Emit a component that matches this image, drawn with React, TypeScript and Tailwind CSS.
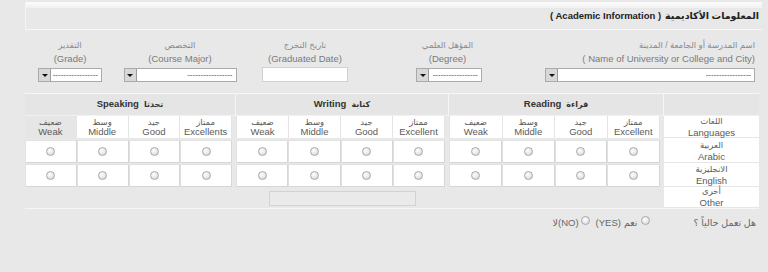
import React from "react";

function Radio() {
  return (
    <span className="inline-block w-[9px] h-[9px] rounded-full border border-[#a9a9a9] bg-[radial-gradient(circle_at_40%_35%,#ffffff_0%,#d2d2d2_100%)]" />
  );
}

function Select({ className }: { className: string }) {
  return (
    <div className={`flex h-[14px] border border-[#aaaaaa] bg-white ${className}`}>
      <div className="w-[12px] h-full bg-[#d8d8d8] border-r border-[#9c9c9c] flex items-center justify-center">
        <div className="w-0 h-0 border-l-[3px] border-r-[3px] border-t-[3px] border-l-transparent border-r-transparent border-t-[#111]" />
      </div>
      <div className="flex-1 flex items-center justify-end pr-[3px] text-[8px] leading-none text-[#444]">
        -----------------
      </div>
    </div>
  );
}

function Label({ ar, en }: { ar: string; en: string }) {
  return (
    <div className="flex flex-col items-center leading-[13px] text-[#7a7a7a]">
      <span className="text-[8.5px] text-[#8a8a8a]">{ar}</span>
      <span className="text-[9.5px]">{en}</span>
    </div>
  );
}

function HCell({ ar, en, gray }: { ar: string; en: string; gray?: boolean }) {
  return (
    <div
      className={`flex-1 flex flex-col items-center justify-center leading-[10px] text-[#5a5a5a] border-r border-[#e4e4e4] ${
        gray ? "bg-[#e6e6e6]" : "bg-white"
      }`}
    >
      <span className="text-[8.5px]">{ar}</span>
      <span className="text-[9.5px]">{en}</span>
    </div>
  );
}

function RCell() {
  return (
    <div className="flex-1 flex items-center justify-center bg-white border-r border-b border-[#d6d6d6]">
      <Radio />
    </div>
  );
}

function RadioGroupRow() {
  return (
    <div className="flex flex-1 pr-[4px]">
      <div className="flex flex-1 border-l border-t border-[#e2e2e2] gap-px bg-[#e0e0e0]">
        <RCell />
        <RCell />
        <RCell />
        <RCell />
      </div>
    </div>
  );
}

function LangCell({ ar, en }: { ar: string; en: string }) {
  return (
    <div className="w-[95px] flex flex-col items-center justify-center bg-white leading-[11px] text-[#5a5a5a] border-b border-[#e6e6e6]">
      <span className="text-[8.5px]">{ar}</span>
      <span className="text-[9.5px]">{en}</span>
    </div>
  );
}

function DataRow({ ar, en, h }: { ar: string; en: string; h: string }) {
  return (
    <div className={`flex ${h}`}>
      <div className="w-[211px] flex">
        <RadioGroupRow />
      </div>
      <div className="w-[213px] flex">
        <RadioGroupRow />
      </div>
      <div className="w-[215px] flex">
        <RadioGroupRow />
      </div>
      <LangCell ar={ar} en={en} />
    </div>
  );
}

function GroupHeader({ en, ar, w }: { en: string; ar: string; w: string }) {
  return (
    <div className={`${w} h-full flex items-center justify-center gap-[5px] border-r border-[#f6f6f6] text-[#333] font-bold`}>
      <span className="text-[9.5px]">{en}</span>
      <span className="text-[8px]">{ar}</span>
    </div>
  );
}

export default function App() {
  return (
    <div className="w-[768px] h-[272px] overflow-hidden bg-[#e8e8e8] font-['Liberation_Sans','DejaVu_Sans',sans-serif] pt-[2px] pl-[25px]">
      {/* Section header */}
      <div className="w-[737px] border-l border-[#f4f4f4]">
        <div className="h-[6px] bg-[linear-gradient(to_bottom,#fbfbfb,#f1f1f1)]" />
        <div className="h-[22px] border-b border-[#f7f7f7] flex justify-end items-start pt-[2px] pr-[3px]">
          <span className="text-[9.5px] leading-[12px] font-bold text-[#222] flex gap-[4px]">
            <span>( Academic Information )</span>
            <span>المعلومات الأكاديمية</span>
          </span>
        </div>
      </div>

      {/* Form fields */}
      <div className="flex w-[737px] pt-[9px]">
        <div className="w-[90px] flex flex-col items-center">
          <Label ar="التقدير" en="(Grade)" />
          <Select className="w-[64px] mt-[3px]" />
        </div>
        <div className="w-[130px] flex flex-col items-center">
          <Label ar="التخصص" en="(Course Major)" />
          <Select className="w-[113px] mt-[3px]" />
        </div>
        <div className="w-[120px] flex flex-col items-center">
          <Label ar="تاريخ التخرج" en="(Graduated Date)" />
          <div className="w-[86px] h-[15px] mt-[2px] bg-white border border-[#d0d0d0]" />
        </div>
        <div className="w-[165px] flex flex-col items-center">
          <Label ar="المؤهل العلمي" en="(Degree)" />
          <Select className="w-[66px] mt-[3px] ml-[3px]" />
        </div>
        <div className="w-[232px] flex flex-col items-end pr-[7px]">
          <div className="flex flex-col items-end leading-[13px] text-[#7a7a7a]">
            <span className="text-[8.5px] text-[#8a8a8a]">اسم المدرسة أو الجامعة / المدينة</span>
            <span className="text-[9.5px]">( Name of University or College and City)</span>
          </div>
          <Select className="w-[210px] mt-[3px]" />
        </div>
      </div>

      {/* Languages table */}
      <div className="w-[734px] mt-[11px] border-t border-[#f6f6f6]">
        <div className="flex h-[22px] bg-[#e5e5e5] border-b border-[#f2f2f2]">
          <GroupHeader en="Speaking" ar="تحدثا" w="w-[211px]" />
          <GroupHeader en="Writing" ar="كتابة" w="w-[213px]" />
          <GroupHeader en="Reading" ar="قراءة" w="w-[215px]" />
          <div className="w-[95px] h-full" />
        </div>
        <div className="flex h-[22px]">
          <div className="w-[211px] flex pr-[4px]">
            <HCell ar="ضعيف" en="Weak" gray />
            <HCell ar="وسط" en="Middle" />
            <HCell ar="جيد" en="Good" />
            <HCell ar="ممتاز" en="Excellents" />
          </div>
          <div className="w-[213px] flex pr-[4px] border-l border-[#e4e4e4]">
            <HCell ar="ضعيف" en="Weak" />
            <HCell ar="وسط" en="Middle" />
            <HCell ar="جيد" en="Good" />
            <HCell ar="ممتاز" en="Excellent" />
          </div>
          <div className="w-[215px] flex pr-[4px] border-l border-[#e4e4e4]">
            <HCell ar="ضعيف" en="Weak" />
            <HCell ar="وسط" en="Middle" />
            <HCell ar="جيد" en="Good" />
            <HCell ar="ممتاز" en="Excellent" />
          </div>
          <LangCell ar="اللغات" en="Languages" />
        </div>
        <div className="h-[2px] flex">
          <div className="w-[639px]" />
          <div className="w-[95px] bg-white" />
        </div>
        <DataRow ar="العربية" en="Arabic" h="h-[23px]" />
        <div className="h-px flex">
          <div className="w-[639px]" />
          <div className="w-[95px] bg-white" />
        </div>
        <DataRow ar="الانجليزية" en="English" h="h-[23px]" />
        <div className="flex h-[22px] border-b border-[#f6f6f6]">
          <div className="w-[639px] pl-[244px] pt-[4px]">
            <div className="w-[147px] h-[15px] bg-[#eaeaea] border border-[#d2d2d2]" />
          </div>
          <LangCell ar="أخرى" en="Other" />
        </div>
      </div>

      {/* Currently working question */}
      <div className="w-[737px] flex justify-end items-center pr-[6px] mt-[7px] text-[#666] leading-[14px] text-[9.5px]">
        <span>لا</span>
        <span>(NO)</span>
        <span className="ml-[2px] -mt-[6px] flex">
          <Radio />
        </span>
        <span className="ml-[6px]">(YES)</span>
        <span className="ml-[3px]">نعم</span>
        <span className="ml-[4px] -mt-[6px] flex">
          <Radio />
        </span>
        <span className="ml-[43px]">هل تعمل حالياً ؟</span>
      </div>
    </div>
  );
}
